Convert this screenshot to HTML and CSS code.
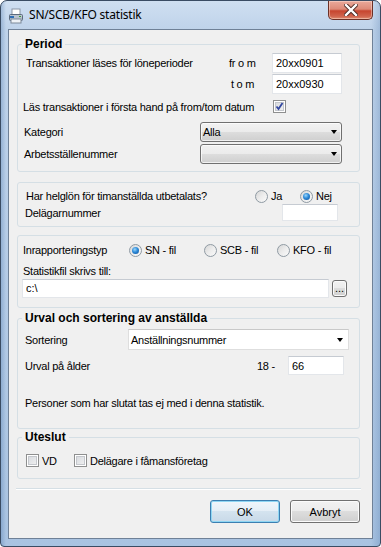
FILE: index.html
```html
<!DOCTYPE html>
<html lang="sv">
<head>
  <meta charset="UTF-8">
  <title>SN/SCB/KFO statistik</title>
  <link rel="stylesheet" href="styles.css">
</head>
<body>

<div class="window">
  <div class="titlebar">
    <svg class="app-icon" width="16" height="16" viewBox="0 0 16 16">
      <rect x="4" y="1" width="8" height="6" fill="#fff" stroke="#8a96a6"/>
      <rect x="1.5" y="6.5" width="13" height="6" rx="1" fill="#b9c3cf" stroke="#5c6b7d"/>
      <rect x="3" y="11" width="10" height="4" fill="#eef2f6" stroke="#7d8a99"/>
      <rect x="2" y="8" width="4" height="2" fill="#2f6fb6"/>
      <rect x="11" y="8" width="2" height="1" fill="#3a9a3a"/>
    </svg>
    <span class="title">SN/SCB/KFO statistik</span>
    <div class="close-btn">
      <svg width="14" height="12" viewBox="0 0 14 12">
        <path d="M2 1 L12 11 M12 1 L2 11" stroke="#4b2a24" stroke-width="4.2" stroke-linecap="square"/>
        <path d="M2 1 L12 11 M12 1 L2 11" stroke="#fff" stroke-width="2.4" stroke-linecap="square"/>
      </svg>
    </div>
  </div>

  <div class="client">

    <fieldset class="group period">
      <legend>Period</legend>
      <div class="row r-from">
        <span class="lbl w-trans">Transaktioner läses för löneperioder</span>
        <span class="lbl w-from">fr o m</span>
        <input class="txt date" value="20xx0901">
      </div>
      <div class="row r-tom">
        <span class="lbl w-tom">t o m</span>
        <input class="txt date" value="20xx0930">
      </div>
      <div class="row r-las">
        <span class="lbl w-las">Läs transaktioner i första hand på from/tom datum</span>
        <span class="check on">
          <svg width="9" height="9" viewBox="0 0 9 9"><path d="M1.5 4.5 L3.5 7 L7.5 1" fill="none" stroke="#3247a0" stroke-width="1.8"/></svg>
        </span>
      </div>
      <div class="row r-kat">
        <span class="lbl w-kat">Kategori</span>
        <div class="combo"><span>Alla</span><i class="arrow"></i></div>
      </div>
      <div class="row r-arb">
        <span class="lbl w-kat">Arbetsställenummer</span>
        <div class="combo"><span></span><i class="arrow"></i></div>
      </div>
    </fieldset>

    <fieldset class="group helg">
      <div class="row r-helg">
        <span class="lbl w-helg">Har helglön för timanställda utbetalats?</span>
        <span class="opt w-ja"><span class="radio"></span>Ja</span>
        <span class="opt"><span class="radio on"></span>Nej</span>
      </div>
      <div class="row r-del">
        <span class="lbl w-del">Delägarnummer</span>
        <input class="txt small" value="">
      </div>
    </fieldset>

    <fieldset class="group inrapp">
      <div class="row r-typ">
        <span class="lbl w-typ">Inrapporteringstyp</span>
        <span class="opt w-sn"><span class="radio on"></span>SN - fil</span>
        <span class="opt w-scb"><span class="radio"></span>SCB - fil</span>
        <span class="opt"><span class="radio"></span>KFO - fil</span>
      </div>
      <div class="row r-stat">
        <span class="lbl">Statistikfil skrivs till:</span>
      </div>
      <div class="row r-path">
        <input class="txt path" value="c:\">
        <button type="button" class="btn browse">...</button>
      </div>
    </fieldset>

    <fieldset class="group urval">
      <legend>Urval och sortering av anställda</legend>
      <div class="row r-sort">
        <span class="lbl w-sort">Sortering</span>
        <div class="combo flat"><span>Anställningsnummer</span><i class="arrow"></i></div>
      </div>
      <div class="row r-alder">
        <span class="lbl w-alder">Urval på ålder</span>
        <span class="lbl w-18">18 -</span>
        <input class="txt small age" value="66">
      </div>
      <div class="row r-pers">
        <span class="lbl">Personer som har slutat tas ej med i denna statistik.</span>
      </div>
    </fieldset>

    <fieldset class="group uteslut">
      <legend>Uteslut</legend>
      <div class="row r-ute">
        <span class="opt w-vd"><span class="check"></span>VD</span>
        <span class="opt"><span class="check"></span>Delägare i fåmansföretag</span>
      </div>
    </fieldset>

    <div class="separator"></div>

    <div class="button-row">
      <button type="button" class="btn dlg default">OK</button>
      <button type="button" class="btn dlg">Avbryt</button>
    </div>

  </div>
</div>

</body>
</html>
```

FILE: styles.css
```css
* {
  box-sizing: border-box;
}
body {
  margin: 0;
  font-family: "Liberation Sans", Arial, sans-serif;
  font-size: 11px;
  letter-spacing: -0.25px;
  color: #000;
  background: #fff;
}
.window {
  width: 381px;
  height: 547px;
  border: 1px solid #3a4c63;
  border-radius: 7px 7px 4px 4px;
  background: linear-gradient(90deg, rgba(40, 90, 150, 0.25) 0, rgba(40, 90, 150, 0) 5px, rgba(255, 255, 255, 0) 370px, rgba(40, 90, 150, 0.2) 379px),
              linear-gradient(#cfdff1 0, #bfd3ea 28px, #b4cbe6 300px, #a9c3e1 100%);
  padding: 0 7px 7px 7px;
  display: flex;
  flex-direction: column;
}

/* title bar */
.titlebar {
  height: 28px;
  display: flex;
  align-items: flex-start;
}
.app-icon {
  margin-top: 7px;
  flex: none;
}
.title {
  margin-left: 5px;
  margin-top: 6px;
  font-family: "Noto Sans", "Open Sans", sans-serif;
  font-size: 12px;
  line-height: 16px;
  letter-spacing: -0.2px;
  color: #000;
}
.close-btn {
  margin-left: auto;
  width: 45px;
  height: 19px;
  border: 1px solid #6b3026;
  border-top: none;
  border-radius: 0 0 5px 5px;
  background: linear-gradient(#e9a99b 0, #dc8a78 45%, #c7452f 55%, #d0644d 85%, #e08c70 100%);
  box-shadow: inset 0 0 0 1px rgba(255, 230, 220, 0.45);
  display: flex;
  align-items: center;
  justify-content: center;
}

/* client area */
.client {
  flex: 1;
  background: #f0f0f0;
  border: 1px solid #6f8197;
  display: flex;
  flex-direction: column;
}

.group {
  margin: 0 12px 0 8px;
  padding: 0;
  min-width: 0;
  border: 1px solid #d5dfe5;
  border-radius: 3px;
}
.group legend {
  margin-left: 4px;
  padding: 0 3px;
  font-weight: bold;
  font-size: 12px;
  line-height: 14px;
  letter-spacing: 0;
}

.row {
  display: flex;
  align-items: center;
}
.lbl {
  flex: none;
  white-space: nowrap;
}
.opt {
  display: flex;
  align-items: center;
  gap: 3px;
  white-space: nowrap;
}

/* period */
.period {
  margin-top: 7px;
  padding-bottom: 7px;
}
.r-from {
  margin-top: 2px;
  height: 20px;
  padding-left: 8px;
}
.w-trans { width: 203px; }
.w-from { width: 43px; }
.r-tom {
  margin-top: 1px;
  height: 20px;
  padding-left: 213px;
}
.w-tom { width: 41px; }
.r-las {
  margin-top: 1px;
  height: 23px;
  padding-left: 5px;
}
.w-las { width: 250px; }
.r-kat {
  margin-top: 4px;
  height: 20px;
  padding-left: 6px;
}
.w-kat { width: 176px; }
.r-arb {
  margin-top: 2px;
  height: 20px;
  padding-left: 6px;
}

/* helglön */
.helg {
  margin-top: 10px;
  padding: 5px 0 5px 0;
}
.r-helg {
  height: 16px;
  padding-left: 8px;
}
.w-helg { width: 229px; }
.w-ja { width: 45px; }
.r-del {
  height: 17px;
  padding-left: 7px;
}
.w-del { width: 257px; }

/* inrapportering */
.inrapp {
  margin-top: 8px;
  padding: 6px 0 9px 0;
}
.r-typ {
  height: 16px;
  padding-left: 5px;
}
.w-typ { width: 106px; }
.w-sn { width: 75px; }
.w-scb { width: 73px; }
.r-stat {
  margin-top: 6px;
  height: 13px;
  padding-left: 5px;
}
.r-path {
  margin-top: 1px;
  height: 20px;
  padding-left: 4px;
  gap: 3px;
}

/* urval */
.urval {
  margin-top: 3px;
  padding-bottom: 18px;
}
.r-sort {
  margin-top: 4px;
  height: 21px;
  padding-left: 7px;
}
.w-sort { width: 103px; }
.r-alder {
  margin-top: 6px;
  height: 19px;
  padding-left: 7px;
}
.w-alder { width: 232px; }
.w-18 { width: 31px; }
.r-pers {
  margin-top: 21px;
  height: 14px;
  padding-left: 7px;
}

/* uteslut */
.uteslut {
  margin-top: 1px;
  padding-bottom: 10px;
}
.r-ute {
  margin-top: 9px;
  height: 15px;
  padding-left: 8px;
}
.w-vd { width: 48px; }

.separator {
  margin: 9px 11px 0 7px;
  border-top: 1px solid #d5dfe5;
  border-bottom: 1px solid #fff;
}
.button-row {
  margin: 10px 12px 0 0;
  display: flex;
  justify-content: flex-end;
  gap: 10px;
}

/* controls */
.txt {
  font: inherit;
  color: #000;
  background: #fff;
  border: 1px solid #e3e6ea;
  border-top-color: #c6cbd2;
  padding: 0 0 0 3px;
  margin: 0;
  outline: none;
}
.date {
  width: 70px;
  height: 20px;
}
.small {
  width: 56px;
  height: 17px;
}
.age {
  height: 19px;
}
.path {
  width: 307px;
  height: 19px;
}

.combo {
  width: 142px;
  height: 20px;
  border: 1px solid #707070;
  border-radius: 3px;
  background: linear-gradient(#f2f2f2 0, #ebebeb 50%, #dddddd 50%, #cfcfcf 100%);
  box-shadow: inset 0 0 0 1px rgba(255, 255, 255, 0.7);
  display: flex;
  align-items: center;
  justify-content: space-between;
  padding: 0 4px 0 2px;
}
.combo.flat {
  width: 221px;
  height: 21px;
  border-radius: 0;
  border-color: #dedede;
  border-top-color: #c9c9c9;
  background: #fff;
  box-shadow: none;
  padding-right: 5px;
}
.arrow {
  width: 0;
  height: 0;
  border-top: 4px solid #000;
  border-left: 3.5px solid transparent;
  border-right: 3.5px solid transparent;
}

.radio {
  width: 13px;
  height: 13px;
  border-radius: 50%;
  border: 1px solid #8f9aa3;
  background: linear-gradient(135deg, #d6d6d6 0, #ececec 50%, #fafafa 100%);
  display: flex;
  align-items: center;
  justify-content: center;
  flex: none;
}
.radio.on::after {
  content: "";
  width: 7px;
  height: 7px;
  border-radius: 50%;
  background: radial-gradient(circle at 40% 35%, #9ad6fb 0, #2d8ad8 45%, #0c4c95 100%);
}

.check {
  width: 13px;
  height: 13px;
  border: 1px solid #8e8f8f;
  background: #fff;
  padding: 1px;
  display: flex;
  align-items: center;
  justify-content: center;
  flex: none;
  background-clip: padding-box;
  box-shadow: inset 0 0 0 1px #fff, inset 0 0 0 2px #c4c7cc;
  background-image: linear-gradient(135deg, #d4d7dc 0, #f3f3f3 100%);
}

.btn {
  font: inherit;
  color: #000;
  border: 1px solid #707070;
  border-radius: 3px;
  background: linear-gradient(#f2f2f2 0, #ebebeb 50%, #dddddd 50%, #cfcfcf 100%);
  box-shadow: inset 0 0 0 1px #fbfbfb;
  padding: 0;
  margin: 0;
}
.browse {
  width: 15px;
  height: 17px;
  line-height: 11px;
  letter-spacing: 0;
}
.dlg {
  width: 70px;
  height: 23px;
}
.dlg.default {
  border-color: #3c7fb1;
  background: linear-gradient(#f0f6fb 0, #e4eef6 50%, #d4e3ef 50%, #c8d9e8 100%);
  box-shadow: inset 0 0 0 1px #8fd6f3;
}
```
